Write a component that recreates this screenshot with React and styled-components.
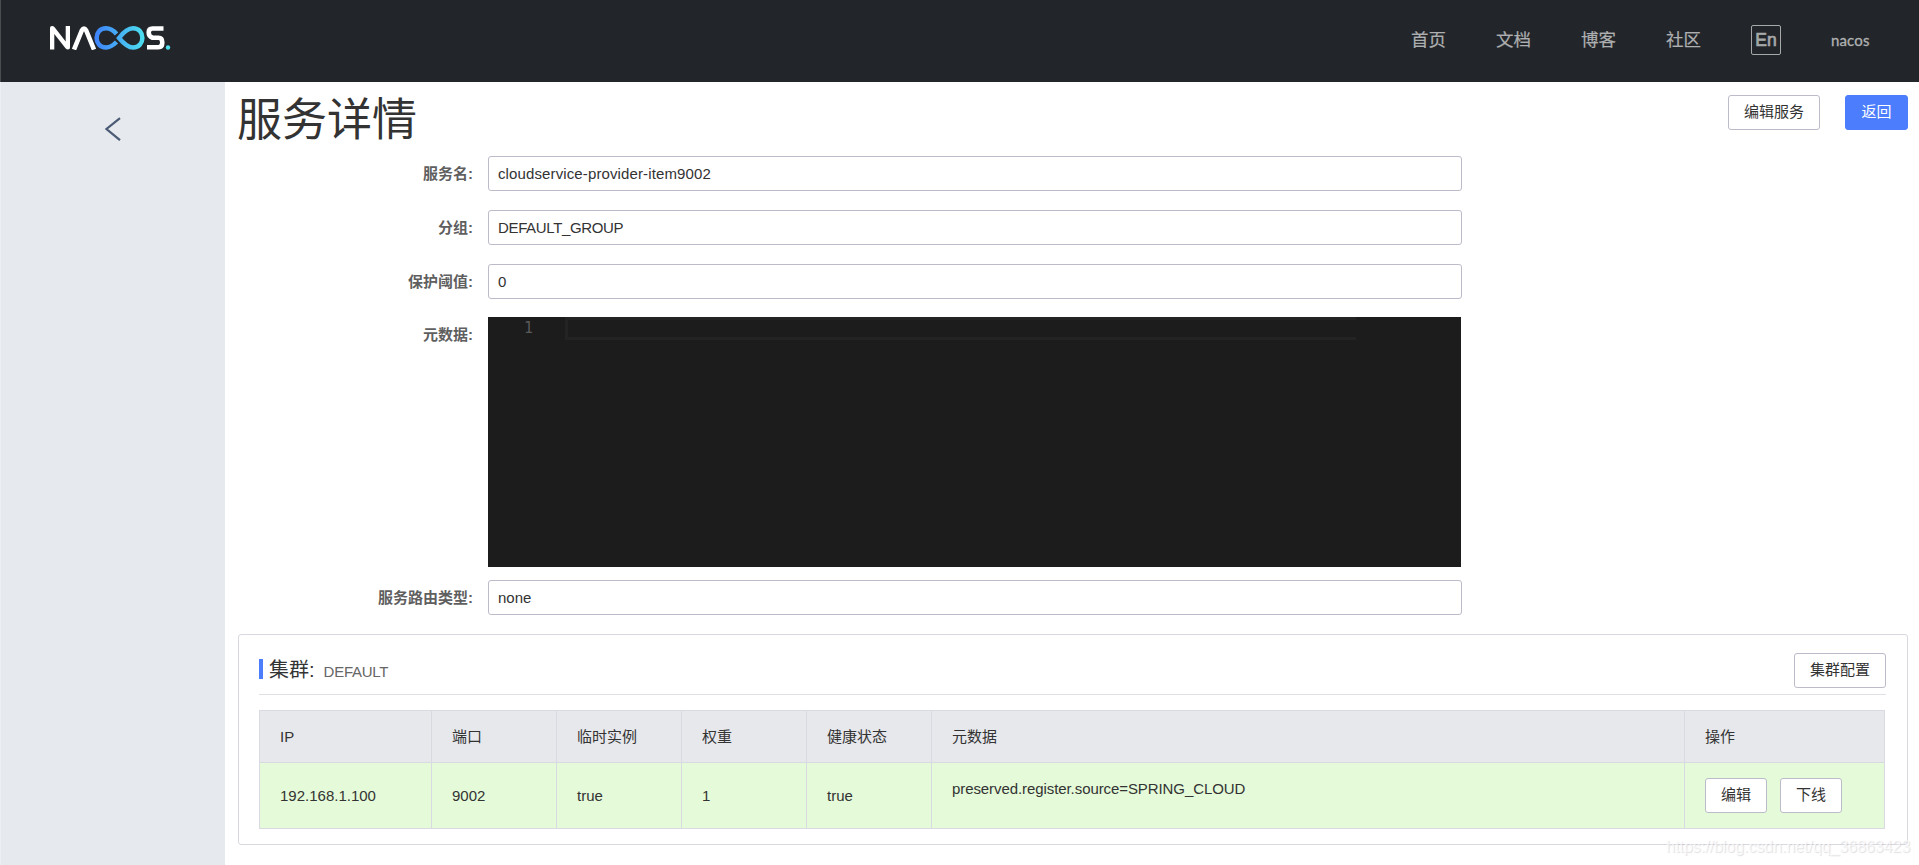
import React from 'react';
import styled, { createGlobalStyle, css } from 'styled-components';

const sans = `"Liberation Sans", "Noto Sans CJK SC", sans-serif`;

const GlobalStyle = createGlobalStyle`
  *, *::before, *::after { box-sizing: border-box; }
  html, body { margin: 0; height: 100%; overflow: hidden; }
  body {
    background: #fff;
    color: #333;
    font: 15px/1.4 ${sans};
  }
`;

const Page = styled.div`
  position: relative;
  display: flex;
  flex-direction: column;
  width: 100%;
  height: 865px;
`;

const Header = styled.header`
  flex: none;
  display: flex;
  align-items: center;
  justify-content: space-between;
  height: 82px;
  padding: 0 49px 0 49px;
  border-left: 1px solid #4a4d50;
  background: #22262a;
`;

const LogoMark = styled.svg`
  display: block;
  width: 121px;
  height: 24px;
  margin-bottom: 6px;
`;

const Nav = styled.nav`
  display: flex;
  align-items: center;
  gap: 50px;
  height: 30px;
  margin-top: -2px;
`;

const NavLink = styled.a`
  width: 35px;
  color: #aeafb0;
  font-size: 17.5px;
  line-height: 30px;
  white-space: nowrap;
  -webkit-text-stroke: 0.2px #aeafb0;
`;

const LangSwitch = styled.button`
  width: 30px;
  height: 30px;
  padding: 0;
  border: 1px solid #a6a8a9;
  border-radius: 2px;
  background: transparent;
  color: #a6a8a9;
  font: 17.5px/28px "Liberation Sans", sans-serif;
  -webkit-text-stroke: 0.7px #a6a8a9;
`;

const UserName = styled.span`
  width: 39px;
  color: #b0b1b2;
  font: 15px/28px Lato, sans-serif;
  letter-spacing: 0.15px;
  -webkit-text-stroke: 0.3px #b0b1b2;
`;

const Body = styled.div`
  flex: 1;
  display: flex;
  min-height: 0;
`;

const Sidebar = styled.aside`
  flex: none;
  display: flex;
  justify-content: center;
  width: 225px;
  padding-top: 35px;
  border-left: 1px solid #eceff3;
  background: #e6e9ee;
`;

const BackArrow = styled.svg`
  width: 16px;
  height: 24px;
`;

const Main = styled.main`
  flex: 1;
  min-width: 0;
  padding: 10px 11px 0 13px;
`;

const TitleRow = styled.div`
  display: flex;
  justify-content: space-between;
  height: 64px;
  padding-top: 3px;
`;

const Title = styled.h1`
  margin: 0 0 0 -1px;
  color: #333;
  font-size: 45px;
  font-weight: 400;
  line-height: 52px;
`;

const Actions = styled.div`
  display: flex;
  gap: ${p => p.$gap}px;
`;

const Button = styled.button`
  flex: none;
  height: 35px;
  min-width: 62px;
  padding: 0 15px 1px;
  border: 1px solid #bcbbc9;
  border-radius: 3px;
  background: #fff;
  color: #333;
  font: 15px/32px ${sans};
  white-space: nowrap;
  ${p => p.$primary && css`
    min-width: 63px;
    border-color: #4b7dfc;
    background: #4b7dfc;
    color: #fff;
  `}
`;

const Form = styled.form`
  display: flex;
  flex-direction: column;
`;

const Field = styled.div`
  display: flex;
  margin-bottom: ${p => p.$gap}px;
`;

const Label = styled.label`
  flex: none;
  width: 235px;
  margin-right: 15px;
  color: #5f5f5f;
  font-weight: 700;
  line-height: 35px;
  text-align: right;
`;

const Input = styled.input`
  width: 974px;
  height: 35px;
  padding: 0 9px 1px;
  border: 1px solid #bcbbc9;
  border-radius: 3px;
  outline: none;
  color: #333;
  font: 15px ${sans};
  letter-spacing: ${p => p.$tracking}px;
`;

const Editor = styled.div`
  display: flex;
  width: 973px;
  height: 250px;
  background: #1c1c1c;
`;

const LineNumber = styled.div`
  width: 77px;
  padding-right: 32px;
  color: #5a5a5a;
  font: 15px/22px "DejaVu Sans Mono", monospace;
  text-align: right;
`;

const CurrentLine = styled.div`
  width: 791px;
  height: 23px;
  border: 3px solid #232323;
  border-right: 0;
`;

const Cluster = styled.section`
  height: 211px;
  padding: 18px 21px 0 20px;
  border: 1px solid #d9d8e0;
  border-radius: 3px;
`;

const ClusterHead = styled.div`
  display: flex;
  justify-content: space-between;
  height: 42px;
  border-bottom: 1px solid #e0e0e4;
`;

const ClusterTitle = styled.div`
  display: flex;
  align-items: baseline;
  height: 35px;
  color: #333;
  font-size: 20px;
  line-height: 35px;

  &::before {
    content: '';
    align-self: flex-start;
    width: 4px;
    height: 20px;
    margin: 6px 6px 0 0;
    background: #4b7dfc;
  }
`;

const ClusterName = styled.span`
  margin-left: 9px;
  color: #666;
  font-size: 15px;
  letter-spacing: -0.25px;
`;

const Table = styled.table`
  width: 1626px;
  margin-top: 15px;
  border-collapse: collapse;
  table-layout: fixed;
`;

const Th = styled.th`
  height: 52px;
  padding: 0 20px 1px;
  border: 1px solid #d9d9e2;
  background: #e7e8ec;
  font-weight: 400;
  text-align: left;
`;

const Td = styled.td`
  height: 66px;
  padding: 0 20px;
  border: 1px solid #d9d9e2;
  background: #e4fad9;
`;

const Metadata = styled.p`
  margin: 0 0 15px;
  letter-spacing: -0.08px;
`;

const Watermark = styled.div`
  position: absolute;
  right: 9px;
  bottom: 7px;
  color: rgba(255, 255, 255, 0.7);
  font-size: 16px;
  line-height: 22px;
  letter-spacing: -0.05px;
  text-shadow: 1px 1px 1px rgba(140, 140, 150, 0.28);
`;

const columns = [
  ['IP', 172],
  ['端口', 125],
  ['临时实例', 125],
  ['权重', 125],
  ['健康状态', 125],
  ['元数据', 753],
  ['操作', 200],
];

function Logo() {
  return (
    <LogoMark viewBox="0 0 121 24" fill="none">
      <defs>
        <linearGradient id="loop" x1="45" x2="95" y1="0" y2="0" gradientUnits="userSpaceOnUse">
          <stop stopColor="#3f82fa" />
          <stop offset="1" stopColor="#4de0ee" />
        </linearGradient>
      </defs>
      <path fill="#fff" d="M0 23.500V2Q0 0 2 0Q3.500 0 4.600 1.300L15.700 15.500V0H20V21.500Q20 23.500 18 23.500Q16.600 23.500 15.500 22.200L4.300 8V23.500Z" />
      <g stroke="#fff" strokeWidth="4.600">
        <path d="M24 23.500L31.800 4.500Q34 0.800 36.200 4.500L44 23.500" />
        <path d="M113.500 2.500H102.500Q98.700 2.500 98.700 6.500T102.500 11.800H108.500Q112.300 11.800 112.300 16.500T108.500 21.200H97" />
      </g>
      <g stroke="url(#loop)" strokeWidth="4.500">
        <path d="M66.500 8C62 2.500 58 2.300 56 2.300C43.500 2.300 43.500 21.500 56 21.500C60 21.500 63 19.500 66.500 16" />
        <path d="M69 12C74 5.500 78 2.300 83 2.300C95.500 2.300 95.500 21.500 83 21.500C78 21.500 74 18 69 12Z" />
      </g>
      <circle cx="118" cy="21.500" r="2.200" fill="#4de0ee" />
    </LogoMark>
  );
}

function TextField({ label, value, gap = 19, tracking = 0 }) {
  return (
    <Field $gap={gap}>
      <Label>{label}</Label>
      <Input value={value} $tracking={tracking} readOnly />
    </Field>
  );
}

export default function App() {
  return (
    <Page>
      <GlobalStyle />
      <Header>
        <Logo />
        <Nav>
          {['首页', '文档', '博客', '社区'].map(item => <NavLink key={item}>{item}</NavLink>)}
          <LangSwitch>En</LangSwitch>
          <UserName>nacos</UserName>
        </Nav>
      </Header>
      <Body>
        <Sidebar>
          <BackArrow viewBox="0 0 16 24" fill="none" stroke="#4b5b75" strokeWidth="2.200">
            <path d="M15 1.200L1.500 12L15 23.200" />
          </BackArrow>
        </Sidebar>
        <Main>
          <TitleRow>
            <Title>服务详情</Title>
            <Actions $gap={25}>
              <Button>编辑服务</Button>
              <Button $primary>返回</Button>
            </Actions>
          </TitleRow>
          <Form>
            <TextField label="服务名:" value="cloudservice-provider-item9002" tracking={0.12} />
            <TextField label="分组:" value="DEFAULT_GROUP" tracking={-0.35} />
            <TextField label="保护阈值:" value="0" gap={18} />
            <Field $gap={13}>
              <Label>元数据:</Label>
              <Editor>
                <LineNumber>1</LineNumber>
                <CurrentLine />
              </Editor>
            </Field>
            <TextField label="服务路由类型:" value="none" />
          </Form>
          <Cluster>
            <ClusterHead>
              <ClusterTitle>
                集群:
                <ClusterName>DEFAULT</ClusterName>
              </ClusterTitle>
              <Button>集群配置</Button>
            </ClusterHead>
            <Table>
              <colgroup>
                {columns.map(([name, width]) => <col key={name} width={width} />)}
              </colgroup>
              <thead>
                <tr>{columns.map(([name]) => <Th key={name}>{name}</Th>)}</tr>
              </thead>
              <tbody>
                <tr>
                  <Td>192.168.1.100</Td>
                  <Td>9002</Td>
                  <Td>true</Td>
                  <Td>1</Td>
                  <Td>true</Td>
                  <Td><Metadata>preserved.register.source=SPRING_CLOUD</Metadata></Td>
                  <Td>
                    <Actions $gap={13}>
                      <Button>编辑</Button>
                      <Button>下线</Button>
                    </Actions>
                  </Td>
                </tr>
              </tbody>
            </Table>
          </Cluster>
        </Main>
      </Body>
      <Watermark>https://blog.csdn.net/qq_36863423</Watermark>
    </Page>
  );
}
